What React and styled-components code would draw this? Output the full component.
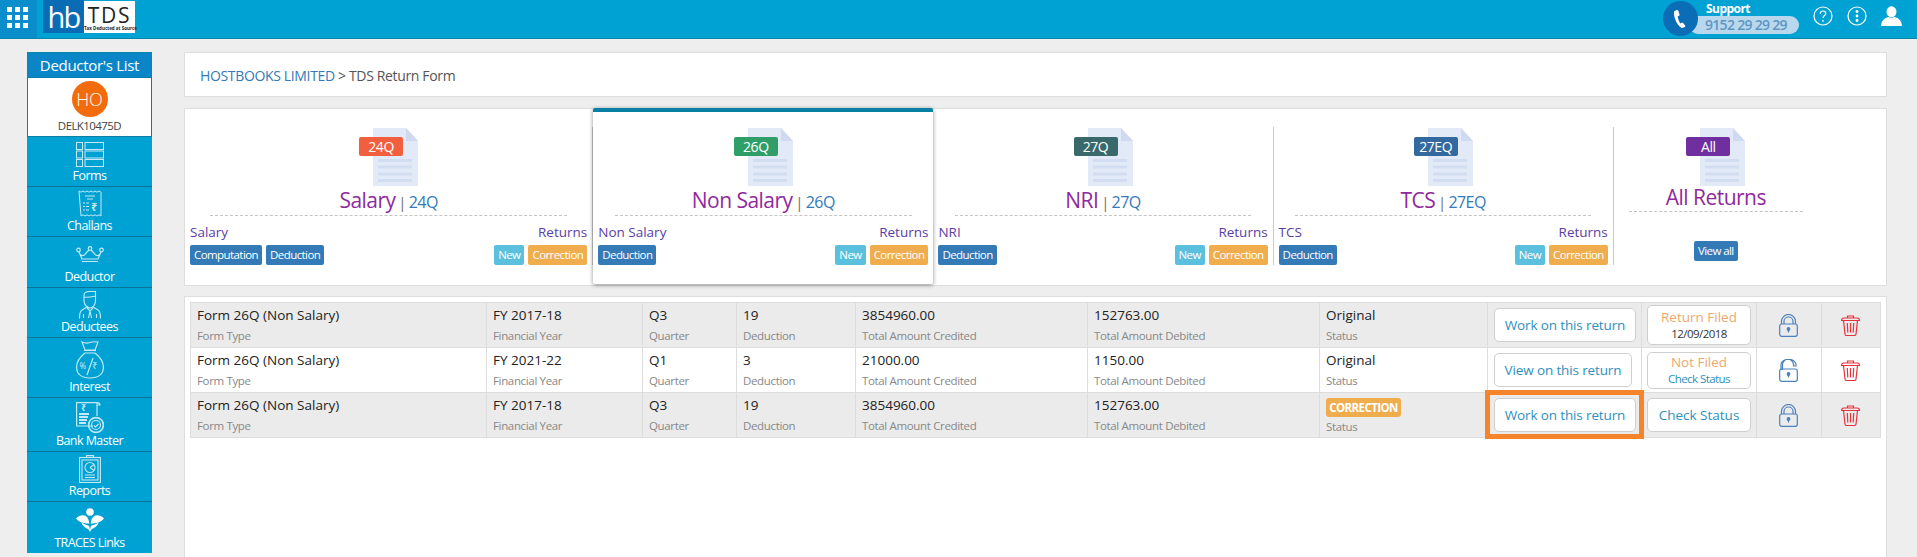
import styled, { createGlobalStyle, css } from "styled-components";

const GlobalStyle = createGlobalStyle`
    html, body {
        margin: 0;
        height: 100%;
        overflow: hidden;
        background: #eeeeee;
        font-family: "Open Sans", "Noto Sans", "Liberation Sans", sans-serif;
        color: #333;
    }
    * {
        box-sizing: border-box;
    }
`;

const Header = styled.header`
    height: 39px;
    background: #00a2d3;
    border-bottom: 1px solid #0b86a8;
    display: flex;
    align-items: flex-start;
`;
const GridButton = styled.div`
    width: 37px;
    height: 38px;
    background: #0a8ecb;
    display: grid;
    grid-template-columns: repeat(3, 5px);
    grid-auto-rows: 5px;
    gap: 3px;
    padding: 7px 0 0 7px;

    & > span {
        background: #fff;
    }
`;
const Logo = styled.div`
    display: flex;
    margin-left: 6px;
    height: 33px;
`;
const LogoHb = styled.div`
    width: 41px;
    background: #0a6cb4;
    color: #fff;
    font-size: 29px;
    line-height: 33px;
    text-align: center;
    letter-spacing: -0.06em;
`;
const LogoTds = styled.div`
    width: 51px;
    background: #fff;
    color: #222;
    margin-top: 1px;
    padding-top: 3px;
    text-align: center;
`;
const LogoName = styled.div`
    font-size: 21px;
    line-height: 22px;
    letter-spacing: 0.08em;
`;
const LogoTag = styled.div`
    font-size: 4.5px;
    line-height: 5px;
    font-weight: 700;
    white-space: nowrap;
`;
const HeaderRight = styled.div`
    margin-left: auto;
    display: flex;
    align-items: flex-start;
    padding-right: 15px;
`;
const PhoneCircle = styled.div`
    position: relative;
    z-index: 1;
    width: 35px;
    height: 35px;
    margin-top: 1px;
    border-radius: 50%;
    background: #0b6db5;
    display: flex;
    align-items: center;
    justify-content: center;
`;
const Support = styled.div`
    margin-left: -9px;
    width: 110px;
`;
const SupportTitle = styled.div`
    color: #fff;
    font-size: 12px;
    font-weight: 700;
    line-height: 14px;
    padding: 2px 0 0 17px;
    letter-spacing: -0.045em;
`;
const SupportNumber = styled.div`
    height: 18px;
    border-radius: 9px;
    background: #b9d8ee;
    color: #5f95c2;
    font-size: 14px;
    font-weight: 600;
    line-height: 18px;
    padding-left: 16px;
    letter-spacing: -0.05em;
`;
const TopIcon = styled.div`
    margin: 6px 0 0 ${(p) => p.$ml}px;
    line-height: 0;
`;

const Page = styled.div`
    display: flex;
    align-items: flex-start;
    padding: 13px 30px 0 27px;
    gap: 32px;
`;

const Sidebar = styled.aside`
    width: 125px;
    flex-shrink: 0;
    background: #00a2d3;
`;
const SideHead = styled.div`
    height: 25px;
    background: #0a86c8;
    border: 1px solid #0b86a8;
    border-bottom: 0;
    color: #fff;
    font-size: 15px;
    line-height: 24px;
    text-align: center;
    letter-spacing: -0.02em;
`;
const SideUser = styled.div`
    height: 60px;
    background: #fff;
    border: 1px solid #0b7fa5;
    display: flex;
    flex-direction: column;
    align-items: center;
    padding-top: 3px;
`;
const Avatar = styled.div`
    width: 36px;
    height: 36px;
    border-radius: 50%;
    background: #f26b0c;
    color: #fff;
    font-size: 18px;
    font-weight: 300;
    line-height: 36px;
    text-align: center;
`;
const UserCode = styled.div`
    font-size: 11.5px;
    line-height: 16px;
    color: #444;
    margin-top: 1px;
    letter-spacing: -0.05em;
`;
const SideItem = styled.div`
    height: ${(p) => p.$h}px;
    display: flex;
    flex-direction: column;
    align-items: center;
    padding-bottom: 3px;
    border-bottom: 1px solid #0b7396;

    &:last-child {
        border-bottom: 0;
    }
`;
const SideIcon = styled.div`
    flex: 1;
    display: flex;
    align-items: center;
    justify-content: center;
    min-height: 0;
    padding-top: 2px;
`;
const SideLabel = styled.div`
    color: #fff;
    font-size: 12.5px;
    line-height: 14px;
    letter-spacing: -0.045em;
`;

const Main = styled.main`
    flex: 1;
    min-width: 0;
`;
const Panel = styled.section`
    background: #fff;
    border: 1px solid #dddddd;
`;
const Breadcrumb = styled(Panel)`
    height: 45px;
    padding-left: 15px;
    font-size: 14px;
    line-height: 45px;
    color: #555;
    letter-spacing: -0.025em;

    & > a {
        color: #337ab7;
    }
`;
const CardsPanel = styled(Panel)`
    height: 178px;
    margin-top: 11px;
    display: grid;
    grid-template-columns: 24% 20% 20% 20% 12%;
`;
const Card = styled.div`
    position: relative;
    background: #fff;
    z-index: ${(p) => (p.$active ? 2 : 0)};
    padding-top: ${(p) => (p.$active ? 15 : 18)}px;
    margin-top: ${(p) => (p.$active ? -1 : 0)}px;
    margin-bottom: ${(p) => (p.$active ? 1 : 0)}px;
    border-top: ${(p) => (p.$active ? "4px solid #0880a6" : "0")};
    border-radius: ${(p) => (p.$active ? "2px" : "0")};
    box-shadow: ${(p) => (p.$active ? "0 1px 4px rgba(0,0,0,.45)" : "none")};
`;
const CardInner = styled.div`
    height: 138px;
    padding: 1px 5px 0;
    border-right: ${(p) => (p.$sep ? "1px solid #cccccc" : "0")};
`;
const DocWrap = styled.div`
    position: relative;
    width: 59px;
    height: 58px;
    margin: 0 auto;
    padding-left: 14px;
    line-height: 0;
`;
const DocBadge = styled.span`
    position: absolute;
    left: 0;
    top: 9px;
    width: 44px;
    height: 19px;
    border-radius: 2px;
    background: ${(p) => p.$bg};
    color: #fff;
    font-size: 14px;
    line-height: 19px;
    text-align: center;
    letter-spacing: -0.03em;
`;
const CardTitle = styled.div`
    height: ${(p) => (p.$compact ? 22 : 28)}px;
    line-height: ${(p) => (p.$compact ? 22 : 28)}px;
    text-align: center;
    color: #8e2a9e;
    font-size: 21px;
    white-space: nowrap;
    letter-spacing: -0.025em;
`;
const CardCode = styled.span`
    color: #337ab7;
    font-size: 16px;
`;
const CardBar = styled.span`
    color: #666;
    font-size: 14px;
    margin: 0 3px;
`;
const Dash = styled.div`
    width: 90%;
    margin: ${(p) => (p.$compact ? 3 : 1)}px auto 0;
    border-top: 1px dashed #c4c4c4;
`;
const ActionRow = styled.div`
    display: flex;
    justify-content: space-between;
    margin-top: 6px;
`;
const ActionCol = styled.div`
    display: flex;
    flex-direction: column;
    align-items: ${(p) => (p.$right ? "flex-end" : "flex-start")};
`;
const ActionLabel = styled.div`
    height: 23px;
    font-size: 13.5px;
    line-height: 20px;
    color: #5a3ea6;
`;
const Buttons = styled.div`
    display: flex;
    gap: 4px;
`;
const Tag = styled.span`
    height: 20px;
    padding: 0 4px;
    border-radius: 2px;
    color: #fff;
    font-size: 11.5px;
    line-height: 20px;
    white-space: nowrap;
    letter-spacing: -0.05em;
    background: ${(p) => p.$bg || "#337ab7"};
`;
const CenterButton = styled.div`
    display: flex;
    justify-content: center;
    margin-top: 29px;
`;

const TablePanel = styled(Panel)`
    height: 261px;
    margin-top: 10px;
    padding: 5px 5px 0;
    border-bottom: 0;
`;
const Rows = styled.div`
    border: 1px solid #dddddd;
    border-bottom: 0;
`;
const Row = styled.div`
    display: grid;
    grid-template-columns: 296px 156px 94px 119px 232px 232px 168px 154px 115px 65px 1fr;
    height: 45px;
    border-bottom: 1px solid #dddddd;
    background: ${(p) => (p.$shaded ? "#ebebeb" : "#fff")};
`;
const Cell = styled.div`
    border-right: 1px solid #dddddd;
    padding: 2px 6px 0;

    &:last-child {
        border-right: 0;
    }
`;
const CellMain = styled.div`
    font-size: 13.5px;
    line-height: 20px;
    color: #222;
    white-space: nowrap;
    margin-bottom: 1px;
`;
const CellSub = styled.div`
    font-size: 11.5px;
    line-height: 20px;
    color: #888;
    white-space: nowrap;
    letter-spacing: -0.03em;
`;
const CorrectionBadge = styled.div`
    width: 75px;
    height: 19px;
    margin: 3px 0 0;
    border-radius: 3px;
    background: #f0ad4e;
    color: #fff;
    font-size: 11.5px;
    font-weight: 700;
    line-height: 19px;
    text-align: center;
    letter-spacing: -0.05em;
`;
const ButtonCell = styled.div`
    border-right: 1px solid #dddddd;
    display: flex;
    align-items: center;
    padding-left: 6px;
`;
const ReturnButton = styled.div`
    position: relative;
    width: ${(p) => p.$w}px;
    height: 34px;
    border: 1px solid #cfcfcf;
    border-radius: 5px;
    background: #fff;
    color: #2f8fbe;
    font-size: 13.5px;
    line-height: 32px;
    text-align: center;
    white-space: nowrap;
    letter-spacing: -0.01em;

    ${(p) =>
        p.$marked &&
        css`
            &::after {
                content: "";
                position: absolute;
                inset: -9px -9px -8px -10px;
                border: 5px solid #f5842a;
            }
        `}
`;
const StatusCell = styled.div`
    border-right: 1px solid #dddddd;
    display: flex;
    align-items: center;
    justify-content: center;
`;
const StatusBox = styled.div`
    width: 104px;
    height: ${(p) => p.$h}px;
    border: 1px solid #cfcfcf;
    border-radius: 5px;
    background: #fff;
    display: flex;
    flex-direction: column;
    align-items: center;
    justify-content: center;
    text-align: center;
`;
const StatusTitle = styled.div`
    font-size: 13.5px;
    line-height: 18px;
    color: ${(p) => p.$color || "#efa76c"};
`;
const StatusSub = styled.div`
    font-size: 11.5px;
    line-height: 16px;
    letter-spacing: -0.05em;
    color: ${(p) => p.$color || "#333"};
`;
const IconCell = styled.div`
    border-right: 1px solid #dddddd;
    display: flex;
    align-items: center;
    justify-content: center;
    padding-right: 1px;

    &:last-child {
        border-right: 0;
    }
`;

const ICON = "#c5e9f6";

const FormsIcon = () => (
    <svg width="28" height="25" viewBox="0 0 28 25" fill="none" stroke={ICON}>
        {[0.5, 9, 17.5].map((y) => (
            <g key={y}>
                <rect x="0.5" y={y} width="6" height="7" />
                <rect x="9" y={y} width="18.5" height="7" />
            </g>
        ))}
    </svg>
);

const ChallansIcon = () => (
    <svg width="24" height="28" viewBox="0 0 24 28" fill="none" stroke={ICON}>
        <path d="M1 1l2 1.2 2-1.2 2 1.2 2-1.2 2 1.2 2-1.2 2 1.2 2-1.2 2 1.2 2-1.2 2 1.2V26l-2-1.2-2 1.2-2-1.2-2 1.2-2-1.2-2 1.2-2-1.2-2 1.2-2-1.2-2 1.2z" />
        <path d="M7 6h10M9 9h6M5 13h2M8 13h3M5 16.5h2M8 16.5h3M5 20h2M8 20h3" />
        <text x="13" y="21" fontSize="11" fontFamily="'Noto Sans', sans-serif" fontWeight="700" fill={ICON} stroke="none">₹</text>
    </svg>
);

const CrownIcon = () => (
    <svg width="28" height="17" viewBox="0 0 28 17" fill="none" stroke={ICON} strokeWidth="1.2">
        <circle cx="2.5" cy="4" r="1.8" />
        <circle cx="14" cy="2.5" r="1.8" />
        <circle cx="25.5" cy="4" r="1.8" />
        <path d="M3 6c1 4 5 5 7 1l3-3M15 4l3 3c2 4 6 3 7-1M25 6l-3 7H6L3 6M6 15.5h16" />
    </svg>
);

const PersonIcon = () => (
    <svg width="22" height="28" viewBox="0 0 22 28" fill="none" stroke={ICON} strokeWidth="1.1">
        <path d="M5 4c0-2 2-3.500 6-3.500h5.500V10c0 4-3 7-5.500 7s-6-3-6-7z" />
        <path d="M5 6c3 1 7 0 11.500-1" />
        <path d="M8 16l-5 3c-2 1-2.500 4-2.500 8.500M14 16l5 3c2 1 2.500 4 2.500 8.500M4.500 27v-4M17.500 27v-4" />
        <path d="M8 17l3 3 3-3M11 20l-1.500 7M11 20l1.500 7" />
    </svg>
);

const BagIcon = () => (
    <svg width="28" height="38" viewBox="0 0 28 38" fill="none" stroke={ICON} strokeWidth="1.2">
        <path d="M6 1c3 1.500 5 1.500 8 0.500s5-1 8-.5l-3 8H9z" />
        <path d="M8 9.500h12M9 12h10" />
        <path d="M9 12C4 16 .6 21 .6 26c0 7 5 11 13.400 11s13.400-4 13.400-11c0-5-3.400-10-8.400-14" />
        <path d="M17 17l-6 17" />
        <text x="3.500" y="28" fontSize="8" fontFamily="'Noto Sans', sans-serif" fill={ICON} stroke="none">%</text>
        <text x="16" y="28" fontSize="10" fontFamily="'Noto Sans', sans-serif" fill={ICON} stroke="none">₹</text>
    </svg>
);

const BankIcon = () => (
    <svg width="28" height="31" viewBox="0 0 28 31" fill="none" stroke={ICON} strokeWidth="1.2">
        <path d="M17 24H.6V.6h20.400V14M21 .6c2 0 3 1 3 2.400h-3" />
        <path d="M3 15h9M3 18h8M3 21h7M3 12h10" strokeWidth="2" />
        <text x="5" y="9" fontSize="9" fontFamily="'Noto Sans', sans-serif" fontWeight="700" fill={ICON} stroke="none">₹</text>
        <circle cx="20" cy="23" r="7.400" strokeWidth="1.6" />
        <circle cx="20" cy="23" r="4.500" />
        <path d="M18 23.500l1.500 1.500 3-3" />
    </svg>
);

const ReportsIcon = () => (
    <svg width="22" height="28" viewBox="0 0 22 28" fill="none" stroke={ICON} strokeWidth="1.1">
        <rect x="0.6" y="2.500" width="20.800" height="25" />
        <rect x="3" y="5" width="16" height="20" />
        <path d="M7.500 2.500V.6h7v1.900" />
        <circle cx="11" cy="12.500" r="5" />
        <path d="M11 12.500l4-3M11 12.500l4 3" />
        <path d="M6 20h10M6 22.500h10" />
    </svg>
);

const TracesIcon = () => (
    <svg width="28" height="24" viewBox="0 0 28 24" fill="#fff">
        <circle cx="14" cy="4" r="3.800" />
        <path d="M0 10.500C3 7 7.500 6.500 10 8c2 1.500 3 4.500 3.300 7.500C8 15.500 3 14.500 0 10.500z" />
        <path d="M28 10.500C25 7 20.500 6.500 18 8c-2 1.500-3 4.500-3.300 7.500 5.300 0 10.300-1 13.300-5z" />
        <path d="M5.500 14.500c3 2 6 2.500 7.500 3.500.8 1.500 1 3.500 1 6 0-2.500.2-4.500 1-6 1.500-1 4.500-1.500 7.500-3.500-.5 3-4 5.500-6.500 6.500-.7.6-1.300 1.800-2 3-.7-1.200-1.300-2.400-2-3-2.500-1-6-3.500-6.500-6.500z" />
    </svg>
);

const PhoneIcon = () => (
    <svg width="15" height="20" viewBox="0 0 15 20" fill="#fff">
        <path d="M3.500 1L1 2.500C.5 8 3.500 15.500 8.500 19l3-.8c.8-.3 1-1 .6-1.600l-2-2.600c-.4-.4-.9-.5-1.400-.2l-1.300.7C5.800 12 4.800 9.500 4.700 7.500l1.300-.7c.5-.3.600-.8.500-1.300L5.300 1.700C5 1 4.200.7 3.500 1z" />
    </svg>
);

const HelpIcon = () => (
    <svg width="20" height="20" viewBox="0 0 20 20" fill="none" stroke="#fff" strokeWidth="1.200">
        <circle cx="10" cy="10" r="9" />
        <path d="M7.300 7.800c0-1.700 1.200-2.800 2.800-2.800s2.700 1 2.700 2.400c0 2.200-2.800 2.200-2.800 4.600" />
        <circle cx="10" cy="14.800" r=".9" fill="#fff" stroke="none" />
    </svg>
);

const MoreIcon = () => (
    <svg width="20" height="20" viewBox="0 0 20 20" fill="none" stroke="#fff" strokeWidth="1.200">
        <circle cx="10" cy="10" r="9" />
        <g fill="#fff" stroke="none">
            <circle cx="10" cy="5.500" r="1.400" />
            <circle cx="10" cy="10" r="1.400" />
            <circle cx="10" cy="14.500" r="1.400" />
        </g>
    </svg>
);

const UserIcon = () => (
    <svg width="21" height="20" viewBox="0 0 21 20" fill="#fff">
        <ellipse cx="10.500" cy="5.800" rx="5" ry="5.500" />
        <path d="M7.500 11c-4 1-7 3-7.500 9h21c-.5-6-3.500-8-7.500-9-1.800 1-4.200 1-6 0z" />
    </svg>
);

const DocIcon = () => (
    <svg width="45" height="58" viewBox="0 0 45 58">
        <path d="M0 0h33l12 13v45H0z" fill="#e3eaf7" />
        <path d="M33 0l12 13H33z" fill="#cfdaf0" />
        <path d="M5 32.500h34M5 39h34M5 46h34M5 52.500h34" stroke="#d3ddf1" strokeWidth="3" />
    </svg>
);

const LockIcon = ({ open }) => (
    <svg width="19" height="23" viewBox="0 0 19 23" fill="none" stroke="#4d80bd" strokeWidth="1.200">
        {open ? (
            <path d="M3.500 11V6a5.500 5.500 0 0 1 11-.5V7h2.500V5.500a7.500 5.500 0 0 0-15 .5v5" />
        ) : (
            <>
                <path d="M2.500 10V7.500a7 7 0 0 1 14 0V10" />
                <path d="M5 10V7.500a4.500 4.500 0 0 1 9 0V10" />
            </>
        )}
        <rect x="0.700" y="10" width="17.600" height="12.300" rx="2" />
        <circle cx="9.500" cy="15" r="1.300" fill="#4d80bd" />
        <path d="M9.500 15v3.500" />
    </svg>
);

const TrashIcon = () => (
    <svg width="19" height="21" viewBox="0 0 19 21" fill="none" stroke="#e8333c" strokeWidth="1.200">
        <path d="M6.500 3V1h6v2" />
        <path d="M.6 5.500c0-1.500 1-2.500 2-2.500h13.800c1 0 2 1 2 2.500z" />
        <path d="M2.500 5.500L4 19c.1 1 .8 1.500 1.500 1.500h8c.7 0 1.400-.5 1.500-1.500l1.500-13.500" />
        <path d="M6.300 8l.5 9.500M9.500 8v9.500M12.700 8l-.5 9.500" />
    </svg>
);

const sideItems = [
    { label: "Forms", h: 50, icon: <FormsIcon /> },
    { label: "Challans", h: 50, icon: <ChallansIcon /> },
    { label: "Deductor", h: 51, icon: <CrownIcon /> },
    { label: "Deductees", h: 50, icon: <PersonIcon /> },
    { label: "Interest", h: 60, icon: <BagIcon /> },
    { label: "Bank Master", h: 54, icon: <BankIcon /> },
    { label: "Reports", h: 50, icon: <ReportsIcon /> },
    { label: "TRACES Links", h: 51, icon: <TracesIcon /> },
];

const cards = [
    { title: "Salary", code: "24Q", color: "#f15f3f", sep: true, tags: ["Computation", "Deduction"] },
    { title: "Non Salary", code: "26Q", color: "#2f9e68", active: true, tags: ["Deduction"] },
    { title: "NRI", code: "27Q", color: "#39696b", tags: ["Deduction"], sep: true },
    { title: "TCS", code: "27EQ", color: "#33699e", tags: ["Deduction"], sep: true },
];

const rows = [
    { fy: "FY 2017-18", q: "Q3", ded: "19", credited: "3854960.00", debited: "152763.00", shaded: true },
    { fy: "FY 2021-22", q: "Q1", ded: "3", credited: "21000.00", debited: "1150.00", open: true },
    { fy: "FY 2017-18", q: "Q3", ded: "19", credited: "3854960.00", debited: "152763.00", shaded: true, correction: true },
];

function StatusContent({ index }) {
    if (index === 0) {
        return (
            <StatusBox $h={40}>
                <StatusTitle>Return Filed</StatusTitle>
                <StatusSub>12/09/2018</StatusSub>
            </StatusBox>
        );
    }
    if (index === 1) {
        return (
            <StatusBox $h={37}>
                <StatusTitle>Not Filed</StatusTitle>
                <StatusSub $color="#2f8fbe">Check Status</StatusSub>
            </StatusBox>
        );
    }
    return (
        <StatusBox $h={34}>
            <StatusTitle $color="#2f8fbe">Check Status</StatusTitle>
        </StatusBox>
    );
}

export default function App() {
    return (
        <>
            <GlobalStyle />
            <Header>
                <GridButton>
                    {Array.from({ length: 9 }, (_, i) => (
                        <span key={i} />
                    ))}
                </GridButton>
                <Logo>
                    <LogoHb>hb</LogoHb>
                    <LogoTds>
                        <LogoName>TDS</LogoName>
                        <LogoTag>Tax Deducted at Source</LogoTag>
                    </LogoTds>
                </Logo>
                <HeaderRight>
                    <PhoneCircle>
                        <PhoneIcon />
                    </PhoneCircle>
                    <Support>
                        <SupportTitle>Support</SupportTitle>
                        <SupportNumber>9152 29 29 29</SupportNumber>
                    </Support>
                    <TopIcon $ml={14}>
                        <HelpIcon />
                    </TopIcon>
                    <TopIcon $ml={14}>
                        <MoreIcon />
                    </TopIcon>
                    <TopIcon $ml={14}>
                        <UserIcon />
                    </TopIcon>
                </HeaderRight>
            </Header>
            <Page>
                <Sidebar>
                    <SideHead>Deductor's List</SideHead>
                    <SideUser>
                        <Avatar>HO</Avatar>
                        <UserCode>DELK10475D</UserCode>
                    </SideUser>
                    {sideItems.map((item) => (
                        <SideItem key={item.label} $h={item.h}>
                            <SideIcon>{item.icon}</SideIcon>
                            <SideLabel>{item.label}</SideLabel>
                        </SideItem>
                    ))}
                </Sidebar>
                <Main>
                    <Breadcrumb>
                        <a>HOSTBOOKS LIMITED</a> &gt; TDS Return Form
                    </Breadcrumb>
                    <CardsPanel>
                        {cards.map((card) => (
                            <Card key={card.code} $active={card.active}>
                                <CardInner $sep={card.sep}>
                                    <DocWrap>
                                        <DocIcon />
                                        <DocBadge $bg={card.color}>{card.code}</DocBadge>
                                    </DocWrap>
                                    <CardTitle>
                                        {card.title}
                                        <CardBar>|</CardBar>
                                        <CardCode>{card.code}</CardCode>
                                    </CardTitle>
                                    <Dash />
                                    <ActionRow>
                                        <ActionCol>
                                            <ActionLabel>{card.title}</ActionLabel>
                                            <Buttons>
                                                {card.tags.map((tag) => (
                                                    <Tag key={tag}>{tag}</Tag>
                                                ))}
                                            </Buttons>
                                        </ActionCol>
                                        <ActionCol $right>
                                            <ActionLabel>Returns</ActionLabel>
                                            <Buttons>
                                                <Tag $bg="#5bc0de">New</Tag>
                                                <Tag $bg="#f0ad4e">Correction</Tag>
                                            </Buttons>
                                        </ActionCol>
                                    </ActionRow>
                                </CardInner>
                            </Card>
                        ))}
                        <Card>
                            <CardInner>
                                <DocWrap>
                                    <DocIcon />
                                    <DocBadge $bg="#6f2f9e">All</DocBadge>
                                </DocWrap>
                                <CardTitle $compact>All Returns</CardTitle>
                                <Dash $compact />
                                <CenterButton>
                                    <Tag>View all</Tag>
                                </CenterButton>
                            </CardInner>
                        </Card>
                    </CardsPanel>
                    <TablePanel>
                        <Rows>
                            {rows.map((row, i) => (
                                <Row key={i} $shaded={row.shaded}>
                                    <Cell>
                                        <CellMain>Form 26Q (Non Salary)</CellMain>
                                        <CellSub>Form Type</CellSub>
                                    </Cell>
                                    <Cell>
                                        <CellMain>{row.fy}</CellMain>
                                        <CellSub>Financial Year</CellSub>
                                    </Cell>
                                    <Cell>
                                        <CellMain>{row.q}</CellMain>
                                        <CellSub>Quarter</CellSub>
                                    </Cell>
                                    <Cell>
                                        <CellMain>{row.ded}</CellMain>
                                        <CellSub>Deduction</CellSub>
                                    </Cell>
                                    <Cell>
                                        <CellMain>{row.credited}</CellMain>
                                        <CellSub>Total Amount Credited</CellSub>
                                    </Cell>
                                    <Cell>
                                        <CellMain>{row.debited}</CellMain>
                                        <CellSub>Total Amount Debited</CellSub>
                                    </Cell>
                                    <Cell>
                                        {row.correction ? (
                                            <CorrectionBadge>CORRECTION</CorrectionBadge>
                                        ) : (
                                            <CellMain>Original</CellMain>
                                        )}
                                        <CellSub>Status</CellSub>
                                    </Cell>
                                    <ButtonCell>
                                        <ReturnButton $w={row.open ? 138 : 142} $marked={row.correction}>
                                            {row.open ? "View on this return" : "Work on this return"}
                                        </ReturnButton>
                                    </ButtonCell>
                                    <StatusCell>
                                        <StatusContent index={i} />
                                    </StatusCell>
                                    <IconCell>
                                        <LockIcon open={row.open} />
                                    </IconCell>
                                    <IconCell>
                                        <TrashIcon />
                                    </IconCell>
                                </Row>
                            ))}
                        </Rows>
                    </TablePanel>
                </Main>
            </Page>
        </>
    );
}
